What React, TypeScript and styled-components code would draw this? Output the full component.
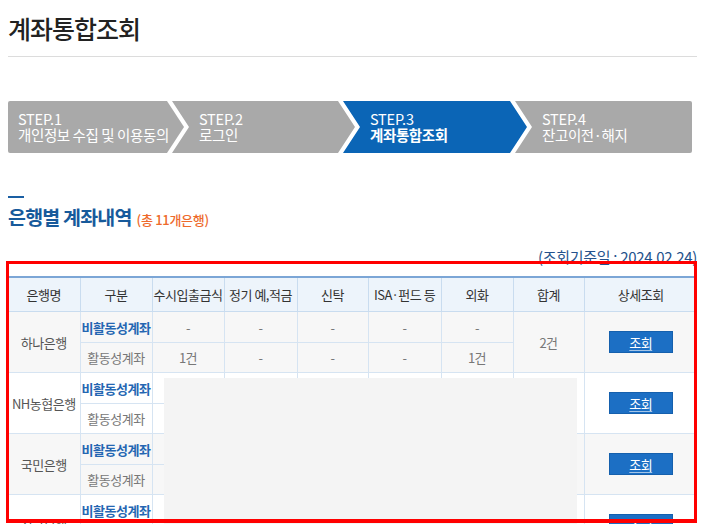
import { FC } from "react";
import styled, { createGlobalStyle } from "styled-components";

const GlobalStyle = createGlobalStyle`
  body {
    margin: 0;
    background: #fff;
    font-family: "Noto Sans CJK KR", "Noto Sans", sans-serif;
    color: #333;
  }
`;

const Page = styled.div`
  width: 713px;
  padding: 0 16px 0 8px;
  box-sizing: border-box;
`;

const Title = styled.h1`
  margin: 0;
  height: 56px;
  display: flex;
  align-items: center;
  font-size: 25px;
  font-weight: 500;
  letter-spacing: -1px;
  color: #222;
  border-bottom: 1px solid #dcdcdc;
`;

/* step bar: chevrons overlap by 12px so a white gap is left between them */
const Steps = styled.ol`
  display: flex;
  list-style: none;
  margin: 44px 0 0;
  padding: 0;
  height: 52px;
`;

const Step = styled.li<{ $active?: boolean; $pos: "first" | "mid" | "last"; $w: number }>`
  width: ${(p) => p.$w}px;
  flex: none;
  height: 52px;
  margin-left: ${(p) => (p.$pos === "first" ? 0 : -12)}px;
  padding-left: ${(p) => (p.$pos === "first" ? 10 : 27)}px;
  box-sizing: border-box;
  background: ${(p) => (p.$active ? "#0b65b6" : "#a9a9a9")};
  color: #fff;
  display: flex;
  flex-direction: column;
  justify-content: center;
  font-size: 14.5px;
  line-height: 16px;
  clip-path: ${(p) =>
    p.$pos === "first"
      ? "polygon(0 0, calc(100% - 17px) 0, 100% 50%, calc(100% - 17px) 100%, 0 100%)"
      : p.$pos === "mid"
      ? "polygon(0 0, calc(100% - 17px) 0, 100% 50%, calc(100% - 17px) 100%, 0 100%, 17px 50%)"
      : "polygon(0 0, 100% 0, 100% 100%, 0 100%, 17px 50%)"};
  border-radius: ${(p) => (p.$pos === "last" ? "0 2px 2px 0" : p.$pos === "first" ? "2px 0 0 2px" : "0")};

  .num {
    letter-spacing: -0.2px;
  }
  .label {
    font-weight: ${(p) => (p.$active ? 700 : 400)};
    letter-spacing: -0.4px;
  }
`;

const SectionHead = styled.div`
  margin-top: 43px;

  &::before {
    content: "";
    display: block;
    width: 16px;
    height: 2px;
    background: #1a5fa3;
  }
`;

const SectionTitle = styled.h2`
  margin: 7px 0 0;
  font-size: 19.5px;
  line-height: 24px;
  font-weight: 700;
  letter-spacing: -0.8px;
  color: #175a9b;

  small {
    font-size: 13px;
    font-weight: 500;
    color: #ee6a2c;
    letter-spacing: -0.3px;
    margin-left: 5px;
  }
`;

const BaseDate = styled.p`
  margin: 15px 0 0;
  text-align: right;
  font-size: 15px;
  line-height: 20px;
  color: #24528c;
  letter-spacing: -0.3px;
`;

const TableWrap = styled.div`
  position: relative;
  margin-top: 9px;
`;

const Table = styled.table`
  width: 689px;
  border-collapse: collapse;
  table-layout: fixed;
  border-top: 2px solid #7ca6d6;
  font-size: 13px;
  letter-spacing: -0.5px;
  text-align: center;

  th {
    height: 33px;
    padding: 0;
    background: #edf4fb;
    font-weight: 400;
    color: #333;
    border: 1px solid #c9dcef;
    border-top: 0;
    white-space: nowrap;
  }
  th:first-child,
  td:first-child {
    border-left: 0;
  }
  th:last-child {
    border-right: 0;
  }
`;

const BankRow = styled.tr<{ $shade: boolean; $h: number }>`
  background: ${(p) => (p.$shade ? "#f7f7f7" : "#fff")};
  height: ${(p) => p.$h}px;
`;

const Cell = styled.td<{ $dashed?: boolean }>`
  padding: 0;
  color: #777;
  border: 1px solid #d6e4f2;
  border-bottom: ${(p) => (p.$dashed ? "1px dashed #bcd2e8" : "1px solid #d6e4f2")};
  white-space: nowrap;
`;

const BankName = styled(Cell)`
  color: #555;
`;

const EndCell = styled(Cell)`
  border-right: 0;
`;

const Kind = styled(Cell)<{ $inactive?: boolean }>`
  color: ${(p) => (p.$inactive ? "#2466b2" : "#777")};
  font-weight: ${(p) => (p.$inactive ? 700 : 400)};
`;

const ViewButton = styled.a`
  display: inline-flex;
  align-items: center;
  justify-content: center;
  width: 64px;
  height: 22px;
  box-sizing: border-box;
  background: #1c6fc4;
  border: 1px solid #1560ad;
  color: #fff;
  font-size: 13px;
  text-decoration: underline;
  text-decoration-color: rgba(255, 255, 255, 0.6);
  text-underline-offset: 2px;
  cursor: pointer;
`;

/* grey block that hides account figures in the capture */
const Mask = styled.div`
  position: absolute;
  left: 156px;
  top: 102px;
  width: 413px;
  height: 200px;
  background: #f4f4f4;
`;

/* red highlight box drawn over the table */
const Highlight = styled.div`
  position: absolute;
  left: -2px;
  top: -15px;
  width: 691px;
  height: 262px;
  box-sizing: border-box;
  border: 3px solid #ff0000;
  border-bottom-width: 4px;
  pointer-events: none;
`;

type Bank = {
  name: string;
  inactive: string[];
  active: string[];
  total: string;
};

const banks: Bank[] = [
  { name: "하나은행", inactive: ["-", "-", "-", "-", "-"], active: ["1건", "-", "-", "-", "1건"], total: "2건" },
  { name: "NH농협은행", inactive: ["-", "-", "-", "-", "-"], active: ["-", "-", "-", "-", "-"], total: "-" },
  { name: "국민은행", inactive: ["-", "-", "-", "-", "-"], active: ["-", "-", "-", "-", "-"], total: "-" },
  { name: "신한은행", inactive: ["-", "-", "-", "-", "-"], active: ["-", "-", "-", "-", "-"], total: "-" },
];

const steps = [
  { num: "STEP.1", label: "개인정보 수집 및 이용동의", w: 176 },
  { num: "STEP.2", label: "로그인", w: 183 },
  { num: "STEP.3", label: "계좌통합조회", w: 184 },
  { num: "STEP.4", label: "잔고이전·해지", w: 177 },
];

const colWidths = [72, 72, 72, 73, 71, 73, 72, 71, 113];
const headers = ["은행명", "구분", "수시입출금식", "정기 예,적금", "신탁", "ISA·펀드 등", "외화", "합계", "상세조회"];

const App: FC = () => {
  return (
    <Page>
      <GlobalStyle />
      <Title>계좌통합조회</Title>

      <Steps>
        {steps.map((s, i) => (
          <Step
            key={s.num}
            $w={s.w}
            $active={i === 2}
            $pos={i === 0 ? "first" : i === steps.length - 1 ? "last" : "mid"}
          >
            <span className="num">{s.num}</span>
            <span className="label">{s.label}</span>
          </Step>
        ))}
      </Steps>

      <SectionHead>
        <SectionTitle>
          은행별 계좌내역<small>(총 11개은행)</small>
        </SectionTitle>
      </SectionHead>

      <BaseDate>(조회기준일 : 2024.02.24)</BaseDate>

      <TableWrap>
        <Table>
          <colgroup>
            {colWidths.map((w, i) => (
              <col key={i} style={{ width: w }} />
            ))}
          </colgroup>
          <thead>
            <tr>
              {headers.map((h) => (
                <th key={h}>{h}</th>
              ))}
            </tr>
          </thead>
          <tbody>
            {banks.map((b, i) => [
              <BankRow key={b.name + "-1"} $shade={i % 2 === 0} $h={31}>
                <BankName rowSpan={2}>{b.name}</BankName>
                <Kind $inactive $dashed>비활동성계좌</Kind>
                {b.inactive.map((v, j) => (
                  <Cell key={j} $dashed>{v}</Cell>
                ))}
                <Cell rowSpan={2}>{b.total}</Cell>
                <EndCell rowSpan={2}>
                  <ViewButton>조회</ViewButton>
                </EndCell>
              </BankRow>,
              <BankRow key={b.name + "-2"} $shade={i % 2 === 0} $h={30}>
                <Kind>활동성계좌</Kind>
                {b.active.map((v, j) => (
                  <Cell key={j}>{v}</Cell>
                ))}
              </BankRow>,
            ])}
          </tbody>
        </Table>
        <Mask />
        <Highlight />
      </TableWrap>
    </Page>
  );
};

export default App;
